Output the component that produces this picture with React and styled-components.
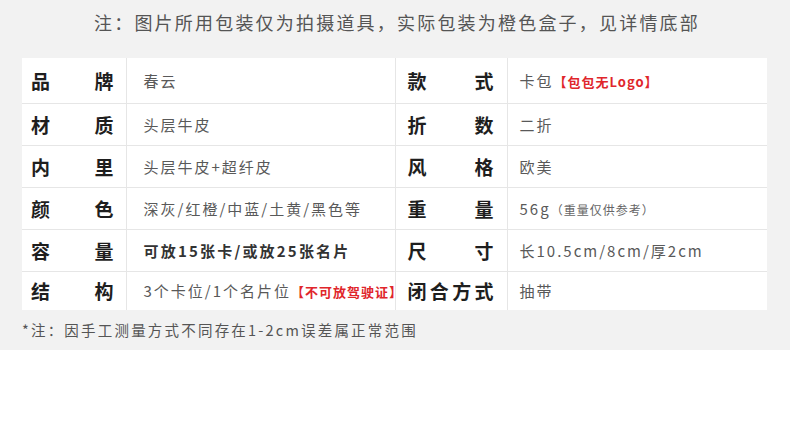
import React from "react";
import styled, { createGlobalStyle } from "styled-components";

const GlobalStyle = createGlobalStyle`
  html, body {
    margin: 0;
    padding: 0;
    background: #ffffff;
    font-family: "Noto Sans CJK SC", "Noto Sans", sans-serif;
  }
`;

const Panel = styled.div`
  width: 790px;
  height: 350px;
  background: #f2f2f2;
  box-sizing: border-box;
  padding-top: 8px;
`;

const Notice = styled.div`
  text-align: center;
  font-size: 18px;
  line-height: 28px;
  letter-spacing: 2.2px;
  color: #555555;
  padding-left: 4px;
`;

const Table = styled.table`
  margin: 22px 0 0 22px;
  width: 745px;
  border-collapse: collapse;
  background: #ffffff;
  table-layout: fixed;

  tr + tr td {
    border-top: 1px solid #e6e6e6;
  }
`;

const Row = styled.tr`
  height: ${({ h }) => h}px;
`;

const Label = styled.td`
  box-sizing: border-box;
  font-size: 19px;
  font-weight: 700;
  color: #1e1e1e;
  text-align: justify;
  text-align-last: justify;
  padding: 0 ${({ pr }) => pr}px 0 ${({ pl }) => pl}px;
  border-right: 1px solid #e6e6e6;
  white-space: nowrap;
`;

const Value = styled.td`
  box-sizing: border-box;
  font-size: 15px;
  letter-spacing: 2px;
  color: #595959;
  padding-left: ${({ pl }) => pl}px;
  border-right: ${({ last }) => (last ? "none" : "1px solid #e6e6e6")};
  white-space: nowrap;
`;

const Strong = styled.span`
  font-weight: 700;
  color: #333333;
  letter-spacing: 2.2px;
`;

const Red = styled.span`
  font-size: 13px;
  font-weight: 700;
  color: #e0262b;
  letter-spacing: 1px;
`;

const Small = styled.span`
  font-size: 12px;
  letter-spacing: 1px;
  color: #666666;
`;

const Footnote = styled.div`
  margin: 9px 0 0 22px;
  font-size: 14.5px;
  letter-spacing: 2.2px;
  color: #555555;
`;

const rows = [
  { h: 45, a: "品牌", av: "春云", b: "款式", bv: <>卡包<Red>【包包无Logo】</Red></> },
  { h: 42, a: "材质", av: "头层牛皮", b: "折数", bv: "二折" },
  { h: 42, a: "内里", av: "头层牛皮+超纤皮", b: "风格", bv: "欧美" },
  { h: 42, a: "颜色", av: "深灰/红橙/中蓝/土黄/黑色等", b: "重量", bv: <>56g<Small>（重量仅供参考）</Small></> },
  { h: 42, a: "容量", av: <Strong>可放15张卡/或放25张名片</Strong>, b: "尺寸", bv: "长10.5cm/8cm/厚2cm" },
  { h: 39, a: "结构", av: <>3个卡位/1个名片位<Red>【不可放驾驶证】</Red></>, b: "闭合方式", bv: "抽带" },
];

export default function App() {
  return (
    <>
      <GlobalStyle />
      <Panel>
        <Notice>注：图片所用包装仅为拍摄道具，实际包装为橙色盒子，见详情底部</Notice>
        <Table>
          <colgroup>
            <col style={{ width: 104 }} />
            <col style={{ width: 269 }} />
            <col style={{ width: 112 }} />
            <col style={{ width: 260 }} />
          </colgroup>
          <tbody>
            {rows.map((r) => (
              <Row key={r.a} h={r.h}>
                <Label pl={9} pr={12}>{r.a}</Label>
                <Value pl={17}>{r.av}</Value>
                <Label pl={12} pr={13}>{r.b}</Label>
                <Value pl={12} last>{r.bv}</Value>
              </Row>
            ))}
          </tbody>
        </Table>
        <Footnote>*注：因手工测量方式不同存在1-2cm误差属正常范围</Footnote>
      </Panel>
    </>
  );
}
